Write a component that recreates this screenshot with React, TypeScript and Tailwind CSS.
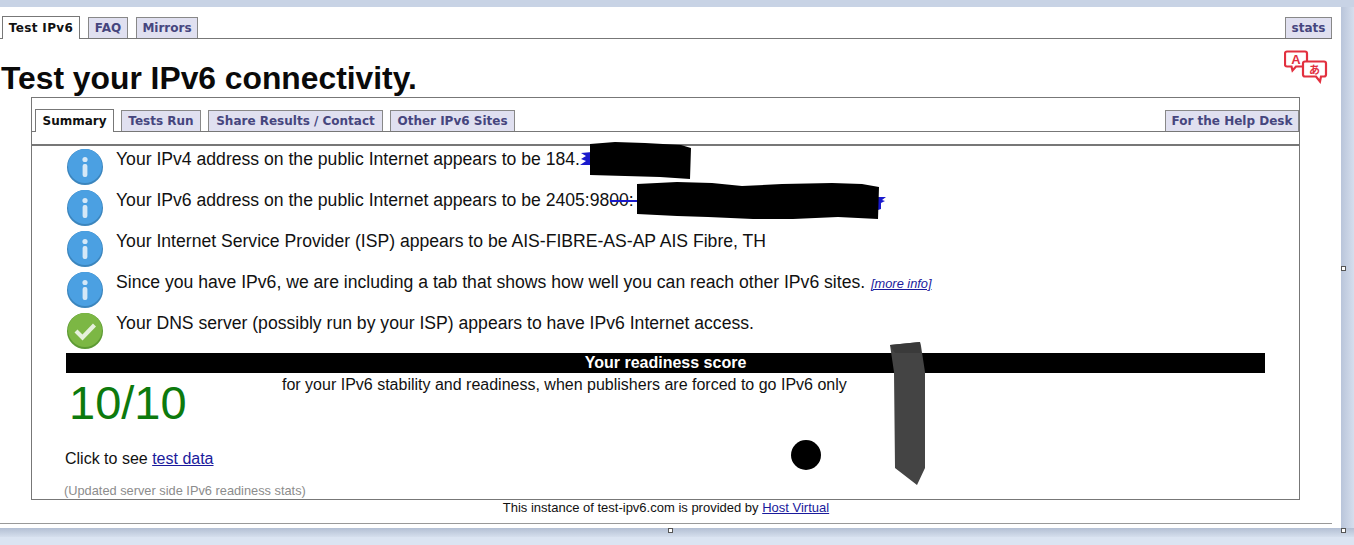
// Página do test-ipv6.com, aba Summary, com os riscos de censura por cima.
type TabProps = { label: string; width: string; active?: boolean };

function PageTab({ label, width, active }: TabProps) {
  if (active) {
    return (
      <div className={"mb-[-1px] flex h-[23px] items-center justify-center border border-b-0 border-[#777] bg-white font-['DejaVu_Sans',sans-serif] text-[12px] font-bold text-[#111] " + width}>
        {label}
      </div>
    );
  }
  return (
    <div className={"flex h-[21px] items-center justify-center border border-b-0 border-[#888] bg-[#e0e0f0] font-['DejaVu_Sans',sans-serif] text-[12px] font-bold text-[#46467e] " + width}>
      {label}
    </div>
  );
}

function InfoIcon() {
  return (
    <svg width="36" height="36" viewBox="0 0 36 36" className="shrink-0">
      <circle cx="18" cy="18" r="18" fill="#3b85bd" />
      <circle cx="18" cy="17" r="17" fill="#4ba0e2" />
      <circle cx="18" cy="10.5" r="2.6" fill="#d5e8f7" />
      <rect x="15.6" y="15" width="4.8" height="13" rx="2" fill="#d5e8f7" />
    </svg>
  );
}

function OkIcon() {
  return (
    <svg width="36" height="36" viewBox="0 0 36 36" className="shrink-0">
      <circle cx="18" cy="18" r="18" fill="#5c9a33" />
      <circle cx="18" cy="17" r="17" fill="#7cb744" />
      <path d="M9 18l6.5 6.5L27.5 12" fill="none" stroke="#e6f1dc" strokeWidth="4.2" />
    </svg>
  );
}

function StatusRow({ ok, children }: { ok?: boolean; children: React.ReactNode }) {
  return (
    <div className="flex h-[41px] gap-[13px] pl-[35px]">
      {ok ? <OkIcon /> : <InfoIcon />}
      <div className="text-[17.6px] leading-[20px] text-[#111]">{children}</div>
    </div>
  );
}

function TranslateIcon() {
  return (
    <svg width="44" height="34" viewBox="0 0 44 34" className="shrink-0">
      <path d="M3 1.5h18a2 2 0 0 1 2 2v11a2 2 0 0 1-2 2H12l-3.5 4-1-4H3a2 2 0 0 1-2-2v-11a2 2 0 0 1 2-2z" fill="#fff" stroke="#e2303f" strokeWidth="2.2" />
      <text x="12" y="13.5" textAnchor="middle" fontSize="13" fontWeight="700" fill="#e2303f" fontFamily="Liberation Sans, sans-serif">A</text>
      <path d="M21 11.5h19a2 2 0 0 1 2 2v11a2 2 0 0 1-2 2h-3l-1 5-4-5H21a2 2 0 0 1-2-2v-11a2 2 0 0 1 2-2z" fill="#fff" stroke="#e2303f" strokeWidth="2.2" />
      <text x="30.5" y="24" textAnchor="middle" fontSize="11" fontWeight="700" fill="#e2303f" fontFamily="Noto Sans CJK JP, sans-serif">あ</text>
    </svg>
  );
}

// riscos feitos à mão sobre o screenshot
function Scribbles() {
  return (
    <svg width="1354" height="545" viewBox="0 0 1354 545" className="pointer-events-none absolute top-0 left-0">
      <path d="M581 153l11-1v13l-12 0 6-4-5-2 5-3z" fill="#1a1acc" />
      <path d="M590 144l25-2 30 1 36 2 10 3-1 31-30-2-70-2z" fill="#000" />
      <path d="M610 201h30" stroke="#1a1acc" strokeWidth="2" />
      <path d="M878 197l8 0-4 3 3 1-4 2 0 6-3 1z" fill="#1a1acc" />
      <path d="M637 184l40-2 35 1 30 3 40-2 50-1 30 1 17 3-1 32-40-2-45 2-40 0-45-2-31-1-40-2z" fill="#000" />
      <path d="M890 345l30-3 1 4 4 26 0 96-8 17-22-17-1-96z" fill="#444" />
      <path d="M890 345l30-3 1 11-26 0z" fill="#3a3a3a" />
      <circle cx="806" cy="455" r="15" fill="#000" />
    </svg>
  );
}

function Handle({ className }: { className: string }) {
  return <div className={"absolute h-[5px] w-[5px] border border-[#555] bg-white " + className} />;
}

export default function App() {
  return (
    <div className="relative flex h-[545px] w-[1354px] flex-col overflow-hidden bg-[#dbe4f2] font-['Liberation_Sans',Arial,sans-serif]">
      <div className="h-[7px] bg-[#c8d3e5]" />
      <div className="flex h-[521px]">
        <div className="w-[1341px] bg-white">
          <div className="flex h-[32px] w-[1332px] items-end justify-between border-b border-[#777] pl-[2px]">
            <div className="flex items-end gap-[8px]">
              <PageTab label="Test IPv6" width="w-[78px] tracking-[0.35px]" active />
              <PageTab label="FAQ" width="w-[40px]" />
              <PageTab label="Mirrors" width="w-[62px]" />
            </div>
            <PageTab label="stats" width="w-[47px]" />
          </div>

          <div className="flex h-[58px] justify-between pr-[13px]">
            <h1 className="mt-[20px] pl-[1px] text-[31.8px] leading-[38px] font-bold text-[#0a0a0a]">Test your IPv6 connectivity.</h1>
            <div className="mt-[11px]">
              <TranslateIcon />
            </div>
          </div>

          <div className="ml-[31px] h-[403px] w-[1269px] border border-[#777] text-[#111]">
            <div className="mt-[11px] flex h-[23px] items-end justify-between border-b border-[#777] pl-[3px]">
              <div className="flex items-end gap-[7px]">
                <PageTab label="Summary" width="w-[79px]" active />
                <PageTab label="Tests Run" width="w-[80px]" />
                <PageTab label="Share Results / Contact" width="w-[175px]" />
                <PageTab label="Other IPv6 Sites" width="w-[125px]" />
              </div>
              <PageTab label="For the Help Desk" width="w-[134px]" />
            </div>
            <div className="mt-[12px] h-[2px] bg-[#777]" />

            <div className="mt-[3px]">
              <StatusRow>Your IPv4 address on the public Internet appears to be 184.</StatusRow>
              <StatusRow>Your IPv6 address on the public Internet appears to be 2405:9800:</StatusRow>
              <StatusRow>Your Internet Service Provider (ISP) appears to be AIS-FIBRE-AS-AP AIS Fibre, TH</StatusRow>
              <StatusRow>
                Since you have IPv6, we are including a tab that shows how well you can reach other IPv6 sites.{" "}
                <a className="ml-[1px] text-[12.8px] text-[#1a1a9c] italic underline">[more info]</a>
              </StatusRow>
              <StatusRow ok>Your DNS server (possibly run by your ISP) appears to have IPv6 Internet access.</StatusRow>
            </div>

            <div className="mt-[-1px] ml-[34px] w-[1199px]">
              <div className="flex h-[20px] items-center justify-center bg-black text-[16px] font-bold text-white">Your readiness score</div>
              <div className="flex h-[54px]">
                <div className="w-[216px] pl-[3px] text-[47px] leading-[60px] text-[#0d7a0d]">10/10</div>
                <div className="pt-[3px] text-[16px] leading-[18px] text-[#111]">for your IPv6 stability and readiness, when publishers are forced to go IPv6 only</div>
              </div>
              <div className="mt-[23px] ml-[-1px] text-[16px] leading-[18px] text-[#111]">
                Click to see <a className="text-[#1a1a9c] underline">test data</a>
              </div>
              <div className="mt-[16px] ml-[-2px] text-[12.8px] leading-[14px] text-[#8c8c8c]">(Updated server side IPv6 readiness stats)</div>
            </div>
          </div>

          <div className="flex h-[15px] w-[1332px] items-center justify-center text-[13px] leading-[15px] text-[#111]">
            <span>
              This instance of test-ipv6.com is provided by <a className="text-[#1a1a9c] underline">Host Virtual</a>
            </span>
          </div>
          <div className="mt-[8px] h-[1px] w-[1332px] bg-[#999]" />
        </div>
        <div className="w-[13px] bg-gradient-to-r from-[#b9c5da] to-[#d5deed]" />
      </div>
      <div className="h-[9px] bg-gradient-to-b from-[#b3bfd3] to-[#d5deed]" />
      <Scribbles />
      <Handle className="top-[266px] left-[1341px]" />
      <Handle className="top-[528px] left-[668px]" />
      <Handle className="top-[528px] left-[1341px]" />
    </div>
  );
}
